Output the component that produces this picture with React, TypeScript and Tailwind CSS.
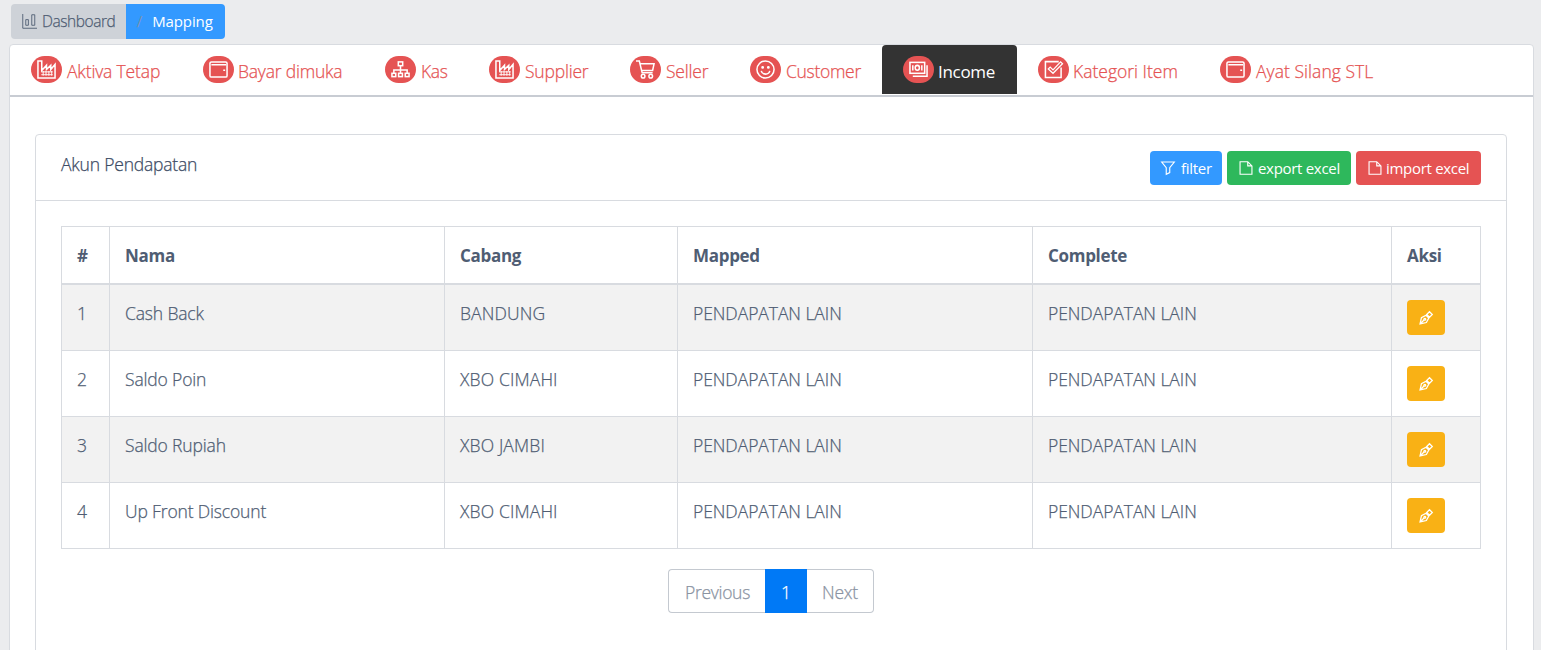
import type { ReactNode } from "react";

type IconName =
  | "factory" | "wallet" | "tree" | "cart" | "smile" | "money" | "check"
  | "chart" | "filter" | "file" | "pen";

const drawings: Record<IconName, ReactNode> = {
  factory: (
    <>
      <path d="M1 19V1h4v10l5-5.500v4.500l4.500-4.500v4.500l4.500-5.500V19z" />
      <path d="M4.500 12.500h12M4.500 15.500h12M6.500 11.500v5M9.500 11.500v5M12.500 11.500v5M15.500 11.500v5" strokeWidth="1" />
    </>
  ),
  wallet: (
    <>
      <rect x="1" y="2" width="18" height="16" rx="1.500" />
      <path d="M2.500 5h15.500M15 10.800h2" />
    </>
  ),
  tree: (
    <>
      <rect x="7.700" y="2" width="4.600" height="4" />
      <rect x="1" y="14" width="4" height="3.500" />
      <rect x="8" y="14" width="4" height="3.500" />
      <rect x="15" y="14" width="4" height="3.500" />
      <path d="M10 6v8M3 14v-3.500h14V14" />
    </>
  ),
  cart: (
    <>
      <path d="M0 1h3.500l3 12.500h11M4 4h15l-1.500 7H6" />
      <circle cx="7.500" cy="17" r="1.900" />
      <circle cx="15.500" cy="17" r="1.900" />
    </>
  ),
  smile: (
    <>
      <circle cx="10" cy="10" r="9" />
      <path d="M5.500 11.500c1 4.500 8 4.500 9 0" />
      <circle cx="7" cy="7.800" r=".7" fill="currentColor" />
      <circle cx="13" cy="7.800" r=".7" fill="currentColor" />
    </>
  ),
  money: (
    <>
      <rect x="1" y="2.500" width="15.500" height="11.500" />
      <path d="M19 5.500v11.500H4" />
      <ellipse cx="8.750" cy="8.250" rx="2.200" ry="2.600" />
      <path d="M4 5.500v5.500M13.500 5.500v5.500" />
    </>
  ),
  check: (
    <>
      <path d="M15.500 1.700H1.500v16.600h16.500V8" />
      <path d="M4.500 9.500l2-2 3 3L17.500 2l2 2L9.500 14z" strokeWidth="1.300" />
    </>
  ),
  chart: (
    <path d="M1 0v19h19M5 7.500h3.500V15H5zM13 1h4v14h-4z" />
  ),
  filter: <path d="M1 1.500h18L12.500 9.500v7l-5 2.500V9.500z" />,
  file: <path d="M1.500 1h11l6 6v12h-17zM12.500 1v6h6" />,
  pen: (
    <>
      <path d="M1.500 18.500l2-9L10 6l4 4-3.500 6.500zM1.500 18.500l6-6M11 5l4-4 4 4-4 4z" />
      <circle cx="8.300" cy="11.700" r="1.300" />
    </>
  ),
};

function Icon({ name, className, stroke = 1.6 }: { name: IconName; className: string; stroke?: number }) {
  return (
    <svg viewBox="0 0 20 20" fill="none" stroke="currentColor" strokeWidth={stroke} className={`shrink-0 overflow-visible ${className}`}>
      {drawings[name]}
    </svg>
  );
}

const tabs: { icon: IconName; label: string; width: string; text: string; active?: boolean }[] = [
  { icon: "factory", label: "Aktiva Tetap", width: "w-[172px]", text: "ml-[5px] tracking-[-0.15px]" },
  { icon: "wallet", label: "Bayar dimuka", width: "w-[182px]", text: "ml-1 tracking-[-0.2px]" },
  { icon: "tree", label: "Kas", width: "w-[104px]", text: "ml-[5px] tracking-[-0.3px]" },
  { icon: "factory", label: "Supplier", width: "w-[141px]", text: "ml-[5px] tracking-[-0.2px]" },
  { icon: "cart", label: "Seller", width: "w-[120px]", text: "ml-[5px] tracking-[-0.2px]" },
  { icon: "smile", label: "Customer", width: "w-[153px]", text: "ml-[5px] tracking-[-0.3px]" },
  { icon: "money", label: "Income", width: "w-[135px]", text: "ml-1 text-[17px] tracking-[-0.3px]", active: true },
  { icon: "check", label: "Kategori Item", width: "w-[182px]", text: "ml-1 tracking-[0px]" },
  { icon: "wallet", label: "Ayat Silang STL", width: "w-[196px]", text: "ml-[5px] tracking-[0.05px]" },
];

const columns = [
  { label: "#", width: "w-[48px]" },
  { label: "Nama", width: "w-[335px]" },
  { label: "Cabang", width: "w-[233px]" },
  { label: "Mapped", width: "w-[355px]" },
  { label: "Complete", width: "w-[359px]" },
  { label: "Aksi", width: "w-[89px]" },
];

const cellTracking = [
  "tracking-[-0.2px]",
  "tracking-[-0.15px]",
  "tracking-[0.15px]",
  "tracking-[-0.05px]",
  "tracking-[-0.05px]",
];

const rows = [
  ["1", "Cash Back", "BANDUNG", "PENDAPATAN LAIN", "PENDAPATAN LAIN"],
  ["2", "Saldo Poin", "XBO CIMAHI", "PENDAPATAN LAIN", "PENDAPATAN LAIN"],
  ["3", "Saldo Rupiah", "XBO JAMBI", "PENDAPATAN LAIN", "PENDAPATAN LAIN"],
  ["4", "Up Front Discount", "XBO CIMAHI", "PENDAPATAN LAIN", "PENDAPATAN LAIN"],
];

export default function App() {
  return (
    <div className="h-[650px] overflow-hidden bg-[#ebecee] pt-1 font-['Open_Sans',sans-serif] text-[17.5px] leading-[26px] font-light text-[#4f5d73] [-webkit-text-stroke:0.25px]">
      <nav className="ml-[11px] flex h-[35px] w-[214px] overflow-hidden rounded text-[15px] leading-[35px]">
        <a className="flex w-[115px] items-center bg-[#ced2d8] pl-[11px]">
          <Icon name="chart" className="mr-[5px] size-[15px]" stroke={1.2} />
          <span className="text-[15.5px] tracking-[-0.45px]">Dashboard</span>
        </a>
        <a className="flex flex-1 bg-[#39f] pl-[11px] text-white">
          <span className="mr-[10px] text-[#8a93a2]">/</span>
          <span className="font-normal tracking-[-0.1px] [-webkit-text-stroke:0px]">Mapping</span>
        </a>
      </nav>

      <main className="mr-[7px] ml-[9px] mt-[5px] h-[700px] rounded border border-[#d8dbe0] bg-white">
        <ul className="flex h-[52px] border-b-2 border-[#c8ccd3]">
          {tabs.map((t) => (
            <li
              key={t.label}
              className={`flex h-[49px] shrink-0 ${t.width} ${t.active ? "rounded-t bg-[#333] font-normal text-white [-webkit-text-stroke:0px]" : "text-[#e55353]"} pl-[21px]`}
            >
              <span className="mt-[11px] flex h-[27px] w-[31px] items-center justify-center rounded-[14px] bg-[#e55353] text-white">
                <Icon name={t.icon} className="size-[19px]" />
              </span>
              <span className={`whitespace-nowrap ${t.active ? "mt-[14px]" : "mt-[13px]"} ${t.text}`}>{t.label}</span>
            </li>
          ))}
        </ul>

        <section className="mr-[26px] ml-[25px] mt-[37px] h-[600px] rounded border border-[#d8dbe0]">
          <header className="flex h-[66px] justify-between border-b border-[#d8dbe0] px-[25px] pt-4">
            <h1 className="tracking-[-0.2px] text-[#3c4b64]">Akun Pendapatan</h1>
            <div className="flex h-[34px] gap-[5px] text-[15px] font-normal text-white [-webkit-text-stroke:0px]">
              <button className="flex w-[72px] items-center rounded bg-[#39f] pl-[11px]">
                <Icon name="filter" className="mr-[6px] size-[14px]" />
                <span className="tracking-[-0.3px]">filter</span>
              </button>
              <button className="flex w-[124px] items-center rounded bg-[#2eb85c] pl-3">
                <Icon name="file" className="mr-[5px] size-[14px]" />
                <span className="whitespace-nowrap tracking-[-0.3px]">export excel</span>
              </button>
              <button className="flex w-[125px] items-center rounded bg-[#e55353] pl-3">
                <Icon name="file" className="mr-[4px] size-[14px]" />
                <span className="whitespace-nowrap tracking-[-0.3px]">import excel</span>
              </button>
            </div>
          </header>

          <table className="mt-[25px] ml-[25px] w-[1420px] table-fixed border-separate border-spacing-0 border-t border-l border-[#d8dbe0] text-left">
            <thead>
              <tr className="h-[58px]">
                {columns.map((c) => (
                  <th key={c.label} className={`${c.width} border-r border-b-2 border-[#d8dbe0] px-[15px] pt-[2px] pb-0 text-[17px] font-bold tracking-[-0.3px] [-webkit-text-stroke:0px]`}>
                    {c.label}
                  </th>
                ))}
              </tr>
            </thead>
            <tbody>
              {rows.map((r) => (
                <tr key={r[0]} className="h-[66px] odd:bg-[#f2f2f2]">
                  {r.map((cell, i) => (
                    <td key={i} className={`border-r border-b border-[#d8dbe0] px-[15px] pt-[15px] pb-0 align-top ${cellTracking[i]}`}>
                      {cell}
                    </td>
                  ))}
                  <td className="border-r border-b border-[#d8dbe0] px-[15px] pt-[15px] pb-0 align-top">
                    <button className="flex h-[35px] w-[38px] items-center justify-center rounded bg-[#f9b115] pt-px text-white">
                      <Icon name="pen" className="size-[14px]" stroke={1.8} />
                    </button>
                  </td>
                </tr>
              ))}
            </tbody>
          </table>

          <div className="mt-5 ml-[632px] flex h-[44px] w-[206px] text-[#8a93a2] leading-[45px]">
            <a className="w-[97px] rounded-l border border-r-0 border-[#c4c9d0] pl-4 tracking-[-0.3px]">Previous</a>
            <a className="w-[42px] bg-[#0079f6] text-center leading-[47px] text-white">1</a>
            <a className="w-[67px] rounded-r border border-l-0 border-[#c4c9d0] pl-[15px] tracking-[-0.2px]">Next</a>
          </div>
        </section>
      </main>
    </div>
  );
}
